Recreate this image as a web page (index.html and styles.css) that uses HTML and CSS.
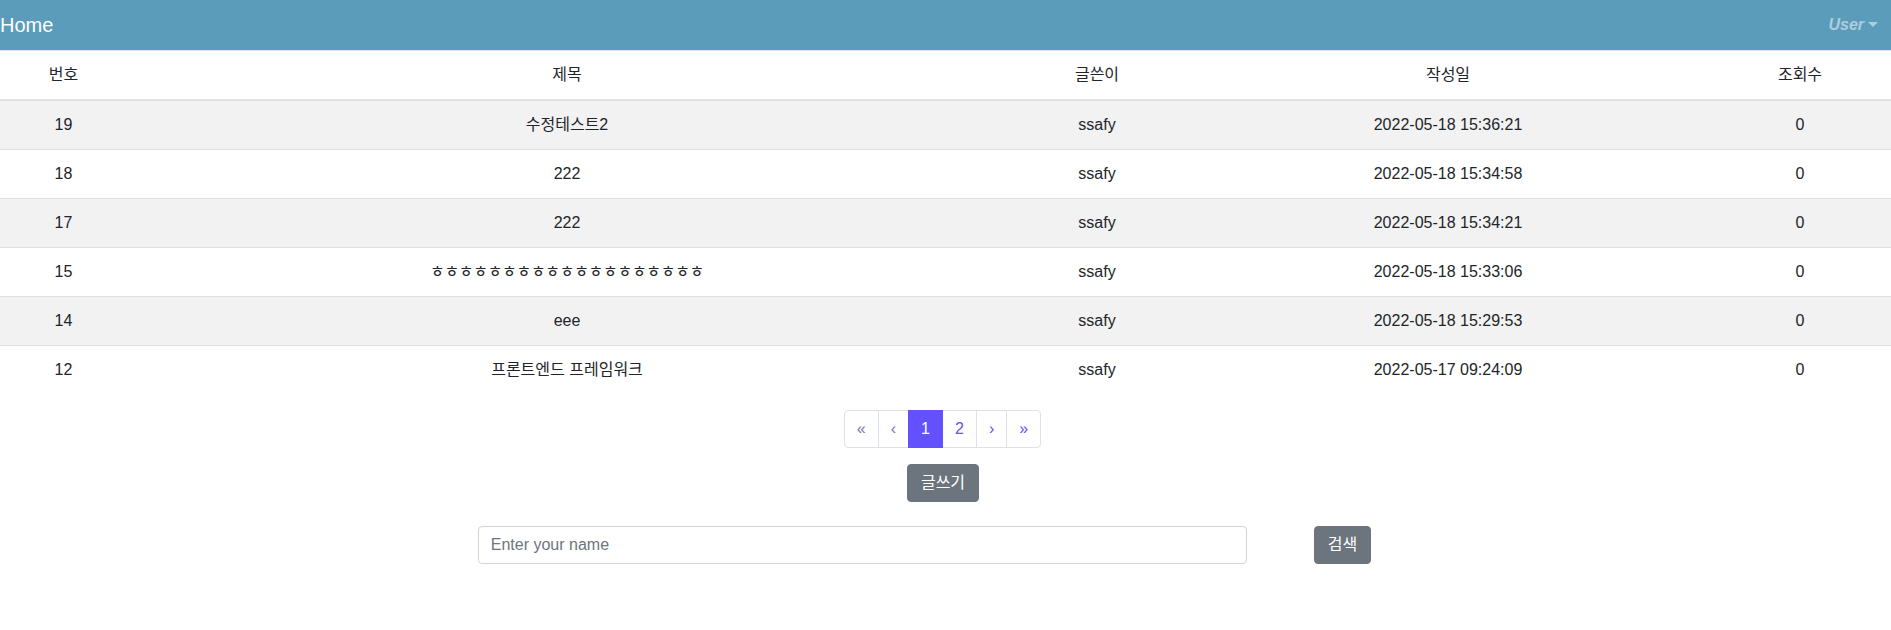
FILE: index.html
```html
<!DOCTYPE html>
<html lang="ko">
<head>
<meta charset="utf-8">
<title>Board</title>
<link rel="stylesheet" href="styles.css">
</head>
<body>
<nav class="navbar">
  <a class="brand" href="#">Home</a>
  <a class="user-toggle" href="#">User<span class="caret"></span></a>
</nav>
<table class="board">
  <colgroup>
    <col class="c-no"><col class="c-title"><col class="c-writer"><col class="c-date"><col class="c-hit">
  </colgroup>
  <thead>
    <tr><th>번호</th><th>제목</th><th>글쓴이</th><th>작성일</th><th>조회수</th></tr>
  </thead>
  <tbody>
    <tr><td>19</td><td>수정테스트2</td><td>ssafy</td><td>2022-05-18 15:36:21</td><td>0</td></tr>
    <tr><td>18</td><td>222</td><td>ssafy</td><td>2022-05-18 15:34:58</td><td>0</td></tr>
    <tr><td>17</td><td>222</td><td>ssafy</td><td>2022-05-18 15:34:21</td><td>0</td></tr>
    <tr><td>15</td><td class="tight">ㅎㅎㅎㅎㅎㅎㅎㅎㅎㅎㅎㅎㅎㅎㅎㅎㅎㅎㅎ</td><td>ssafy</td><td>2022-05-18 15:33:06</td><td>0</td></tr>
    <tr><td>14</td><td>eee</td><td>ssafy</td><td>2022-05-18 15:29:53</td><td>0</td></tr>
    <tr><td>12</td><td>프론트엔드 프레임워크</td><td>ssafy</td><td>2022-05-17 09:24:09</td><td>0</td></tr>
  </tbody>
</table>
<ul class="pagination">
  <li class="page disabled"><span class="page-link">«</span></li>
  <li class="page disabled"><span class="page-link">‹</span></li>
  <li class="page active"><span class="page-link">1</span></li>
  <li class="page"><a class="page-link" href="#">2</a></li>
  <li class="page"><a class="page-link" href="#">›</a></li>
  <li class="page"><a class="page-link" href="#">»</a></li>
</ul>
<div class="write-row">
  <button class="btn" type="button">글쓰기</button>
</div>
<form class="search-row">
  <input class="search-input" type="text" placeholder="Enter your name">
  <button class="btn" type="button">검색</button>
</form>
</body>
</html>
```
FILE: styles.css
```css
* { box-sizing: border-box; }
html, body { margin: 0; padding: 0; }
body {
  font-family: "Liberation Sans", Arial, "Noto Sans CJK KR", sans-serif;
  font-size: 16px;
  line-height: 1.5;
  color: #212529;
  background: #fff;
}
.navbar {
  height: 50px;
  background: #5a9cb9;
  display: flex;
  align-items: center;
  justify-content: space-between;
  padding: 0 13px 0 0;
}
.brand {
  color: #fff;
  text-decoration: none;
  font-size: 20px;
  line-height: 30px;
}
.user-toggle {
  color: rgba(255,255,255,.5);
  text-decoration: none;
  font-weight: bold;
  font-style: italic;
  font-size: 16px;
  display: flex;
  align-items: center;
}
.caret {
  display: inline-block;
  margin-left: 4px;
  width: 0;
  height: 0;
  border-top: 5px solid rgba(255,255,255,.5);
  border-left: 5px solid transparent;
  border-right: 5px solid transparent;
  margin-top: -2px;
}
.board {
  width: 100%;
  table-layout: fixed;
  border-collapse: collapse;
  margin-bottom: 16px;
}
.c-no { width: 127px; }
.c-title { width: 880px; }
.c-writer { width: 180px; }
.c-date { width: 522px; }
.c-hit { width: 182px; }
.board th, .board td {
  text-align: center;
  padding: 12px;
  border-top: 1px solid #dee2e6;
  font-weight: normal;
  vertical-align: top;
  white-space: nowrap;
}
.board td.tight { letter-spacing: -0.3px; }
.board thead th {
  border-bottom: 2px solid #dee2e6;
}
.board tbody tr:nth-child(odd) { background: #f2f2f2; }
.pagination {
  list-style: none;
  margin: 0 0 16px;
  padding: 0 6px 0 0;
  display: flex;
  justify-content: center;
}
.page-link {
  display: block;
  padding: 8px 12px;
  line-height: 20px;
  border: 1px solid #dee2e6;
  margin-left: -1px;
  color: #6351ff;
  text-decoration: none;
  background: #fff;
}
.page:first-child .page-link { margin-left: 0; border-radius: 4px 0 0 4px; }
.page:last-child .page-link { border-radius: 0 4px 4px 0; }
.page.disabled .page-link { color: #7a76a8; }
.page.active .page-link {
  background: #6351ff;
  border-color: #6351ff;
  color: #fff;
  position: relative;
  z-index: 1;
}
.write-row {
  display: flex;
  justify-content: center;
  padding-right: 5px;
}
.btn {
  font-family: inherit;
  font-size: 16px;
  line-height: 24px;
  padding: 6px 13px;
  color: #fff;
  background: #6c757d;
  border: 1px solid #6c757d;
  border-radius: 4px;
}
.search-row {
  display: flex;
  justify-content: center;
  align-items: center;
  gap: 67px;
  padding-right: 42px;
  margin-top: 24px;
}
.search-input {
  width: 769px;
  height: 38px;
  padding: 6px 12px;
  font-family: inherit;
  font-size: 16px;
  color: #495057;
  border: 1px solid #ced4da;
  border-radius: 4px;
}
.search-input::placeholder { color: #6c757d; }
```
